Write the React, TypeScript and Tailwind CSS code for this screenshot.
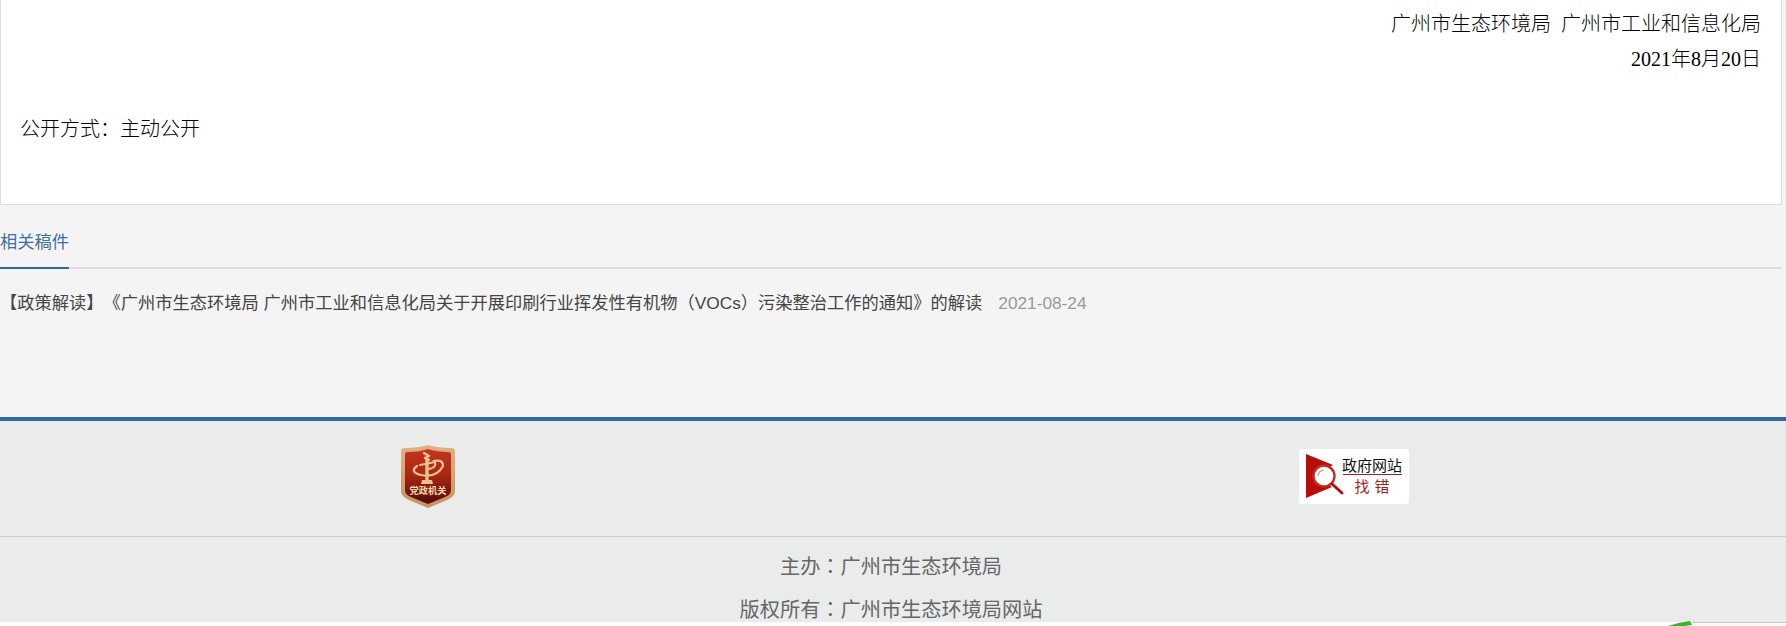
const CJK = "font-['Liberation_Serif','Noto_Sans_CJK_SC',serif]";
const SANS = "font-['Liberation_Sans','Noto_Sans_CJK_SC',sans-serif]";

function PartyBadge() {
  return (
    <svg width="56" height="64" viewBox="0 0 56 64">
      <defs>
        <linearGradient id="shield" x1="0" y1="0" x2="0" y2="1">
          <stop offset="0" stopColor="#c4351f" />
          <stop offset="0.5" stopColor="#a8260f" />
          <stop offset="0.75" stopColor="#7c150b" />
          <stop offset="1" stopColor="#4f0a06" />
        </linearGradient>
        <linearGradient id="rim" x1="0" y1="0" x2="0" y2="1">
          <stop offset="0" stopColor="#e2b184" />
          <stop offset="1" stopColor="#c8925f" />
        </linearGradient>
      </defs>
      <path d="M1 6 Q1 3 5 3 Q18 3 28 0 Q38 3 51 3 Q55 3 55 6 L55 46 Q55 52 47 55 L28 63 L9 55 Q1 52 1 46 Z" fill="url(#rim)" />
      <path d="M5 9 Q5 7 8 7 Q19 7 28 4 Q37 7 48 7 Q51 7 51 9 L51 45 Q51 50 45 52 L28 59 L11 52 Q5 50 5 45 Z" fill="url(#shield)" />
      <g fill="none" stroke="#ecc096" strokeLinecap="round">
        <path d="M24 8 L29 11 L25 13 L29 15" strokeWidth="2.4" strokeLinejoin="round" />
        <path d="M27 14 L27 35" strokeWidth="3.4" />
        <path d="M20 20 L35 17" strokeWidth="2" />
        <path d="M17 21 Q9 27 21 30 Q37 33 43 21 Q43 14 34 16 Q38 22 29 24" strokeWidth="2.2" />
      </g>
      <path d="M22 35 H32 L33 39 H21 Z" fill="#ecc096" />
      <text x="28" y="49" textAnchor="middle" fontSize="9.25" fill="#f3d8b4" fontFamily="'Noto Sans CJK SC', sans-serif" fontWeight="700">
        党政机关
      </text>
    </svg>
  );
}

function ErrorBadge() {
  return (
    <div className="flex h-[55px] w-[110px] items-center rounded-[3px] bg-white">
      <svg width="46" height="44" viewBox="0 0 46 44" className="ml-[7px] shrink-0">
        <path d="M0 0 L27 11 A12 12 0 0 0 26 33 L0 44 Z" fill="#b70d0a" />
        <circle cx="18" cy="22" r="10.5" fill="#fff" stroke="#c02a27" strokeWidth="2.4" />
        <path d="M12 22 A6 6 0 0 1 18 16" fill="none" stroke="#e08a88" strokeWidth="1.2" />
        <path d="M26 30 L36 39" stroke="#b70d0a" strokeWidth="3" strokeLinecap="round" />
      </svg>
      <div className="ml-[-10px] flex w-[60px] flex-col items-center font-['Noto_Sans_CJK_SC',sans-serif]">
        <span className="text-[15px] leading-[19px] whitespace-nowrap text-[#111]">政府网站</span>
        <span className="h-[1px] w-[59px] bg-[#a81c1c]" />
        <span className="pl-[5px] text-[15px] leading-[22px] tracking-[5px] text-[#a81c1c]">找错</span>
      </div>
    </div>
  );
}

export default function App() {
  return (
    <div className="relative h-[626px] w-[1786px] overflow-hidden bg-white">
      <div className="h-[417px] bg-[#f4f4f4]">
        <div className={`h-[205px] w-[1782px] border-x border-b border-[#ddd] bg-white text-[20px] font-light text-black ${CJK}`}>
          <div className="flex flex-col items-end pr-[20px] pt-[7px]">
            <p className="leading-[35px] [word-spacing:5px]">广州市生态环境局 广州市工业和信息化局</p>
            <p className="leading-[35px]">2021年8月20日</p>
          </div>
          <p className="pl-[19px] pt-[35px] leading-[35px] [text-spacing-trim:space-all]">公开方式：主动公开</p>
        </div>

        <div className={`w-[1782px] text-[17.25px] ${SANS}`}>
          <div className="mt-[15px] border-b-2 border-[#ddd]">
            <span className="-mb-[2px] inline-block h-[49px] w-[69px] border-b-2 border-[#2d6a9f] leading-[45px] whitespace-nowrap text-[#3f6f9f]">
              相关稿件
            </span>
          </div>
          <div className="mt-[19px] flex leading-[30px] text-[#444] [text-spacing-trim:space-all]">
            <span>【政策解读】《广州市生态环境局 广州市工业和信息化局关于开展印刷行业挥发性有机物（VOCs）污染整治工作的通知》的解读</span>
            <span className="ml-[16px] text-[#999]">2021-08-24</span>
          </div>
        </div>
      </div>

      <footer className="h-[205px] overflow-hidden border-t-4 border-[#2d6a9f] bg-[#eaecec]">
        <div className="flex h-[116px] items-center justify-between border-b border-[#ccc] pl-[400px] pr-[377px]">
          <div className="mb-[3px] flex"><PartyBadge /></div>
          <div className="mb-[5px]"><ErrorBadge /></div>
        </div>
        <div className={`flex w-[1782px] flex-col gap-[16px] pt-[16px] text-center text-[20.2px] leading-[26px] text-[#666] ${SANS}`}>
          <p>主办<span className="font-['Noto_Sans_CJK_TC',sans-serif]">：</span>广州市生态环境局</p>
          <p>版权所有<span className="font-['Noto_Sans_CJK_TC',sans-serif]">：</span>广州市生态环境局网站</p>
        </div>
      </footer>

      <div className="absolute right-0 bottom-0 h-[4px] w-[94px] border-t border-[#c4c9d4] bg-[#fafafa]" />
      <svg className="absolute bottom-0 left-[1668px]" width="26" height="5" viewBox="0 0 26 5">
        <path d="M0 5 Q10 1.5 22 0 L24 4 L16 5 Z" fill="#3db52a" />
      </svg>
    </div>
  );
}
